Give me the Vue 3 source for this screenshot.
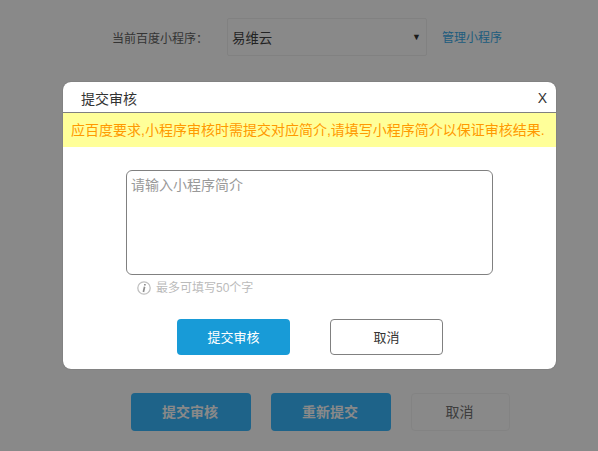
<template>
  <div class="page">
    <div class="app-row">
      <span class="app-label">当前百度小程序：</span>
      <div class="app-select">
        <span>易维云</span>
        <span class="arrow">▼</span>
      </div>
      <a class="manage-link">管理小程序</a>
    </div>

    <div class="page-actions">
      <button class="page-btn primary">提交审核</button>
      <button class="page-btn primary">重新提交</button>
      <button class="page-btn ghost">取消</button>
    </div>

    <!-- Submit dialog -->
    <div class="overlay">
      <div class="dialog">
        <div class="dialog-header">
          <span class="dialog-title">提交审核</span>
          <span class="dialog-close">X</span>
        </div>
        <div class="notice">应百度要求,小程序审核时需提交对应简介,请填写小程序简介以保证审核结果.</div>

        <div class="dialog-body">
          <textarea v-model="intro" class="intro-input" placeholder="请输入小程序简介" maxlength="50"></textarea>
          <div class="hint">
            <svg class="hint-icon" width="14" height="14" viewBox="0 0 14 14">
              <circle cx="7" cy="7" r="6.2" fill="none" stroke="#c0c0c0" stroke-width="1.3" />
              <path d="M7.9 3v1.6M7.6 5.8 6.4 11" fill="none" stroke="#8f8f8f" stroke-width="1.7" />
            </svg>
            <span>最多可填写50个字</span>
          </div>
          <div class="dialog-actions">
            <button class="dialog-btn submit">提交审核</button>
            <button class="dialog-btn cancel">取消</button>
          </div>
        </div>
      </div>
    </div>
  </div>
</template>

<script setup>
import { ref } from 'vue';

const intro = ref('');
</script>

<style>
html,
body {
  margin: 0;
  background: #fff;
}
</style>

<style scoped>
.page {
  position: relative;
  width: 598px;
  height: 451px;
  overflow: hidden;
  background: #fff;
  font-family: "Liberation Sans", "Noto Sans CJK SC", sans-serif;
  font-size: 12px;
  color: #333;
}

.app-row {
  display: flex;
  align-items: center;
  height: 38px;
  padding: 18px 0 0 112px;
}

.app-label {
  width: 115px;
  color: #555;
}

.app-select {
  display: flex;
  align-items: center;
  justify-content: space-between;
  box-sizing: border-box;
  width: 200px;
  height: 38px;
  padding: 0 5px 0 4px;
  border: 1px solid #eee;
  border-radius: 2px;
  font-size: 13.4px;
}

.arrow {
  font-size: 9px;
  color: #222;
}

.manage-link {
  margin-left: 15px;
  margin-top: -2px;
  color: #2aa5e8;
  font-size: 12px;
}

.page-actions {
  display: flex;
  gap: 20px;
  padding: 337px 0 0 131px;
}

.page-btn {
  box-sizing: border-box;
  width: 120px;
  height: 38px;
  padding: 0 2px 2px 0;
  border: 0;
  border-radius: 4px;
  font-family: inherit;
  font-size: 14px;
}

.page-btn.primary {
  background: #28b2ff;
  color: #fff;
  font-weight: bold;
}

.page-btn.ghost {
  width: 99px;
  background: #fff;
  border: 1px solid #f2f2f2;
  color: #666;
}

.overlay {
  position: absolute;
  inset: 0;
  background: rgba(20, 20, 20, 0.5);
}

.dialog {
  position: absolute;
  left: 63px;
  top: 82px;
  width: 493px;
  height: 287px;
  background: #fff;
  border-radius: 8px;
  overflow: hidden;
  box-shadow: 0 0 1px rgba(0, 0, 0, 0.5);
}

.dialog-header {
  display: flex;
  align-items: center;
  justify-content: space-between;
  box-sizing: border-box;
  height: 31px;
  padding: 2px 9px 0 18px;
  border-bottom: 1px solid #808080;
  font-size: 14px;
  color: #333;
}

.dialog-close {
  font-size: 14px;
}

.notice {
  height: 34px;
  padding-left: 8px;
  line-height: 34px;
  background: #ffff99;
  color: #ff9900;
  font-size: 14px;
  white-space: nowrap;
}

.dialog-body {
  display: flex;
  flex-direction: column;
  padding: 23px 63px 0;
}

.intro-input {
  display: block;
  box-sizing: border-box;
  width: 367px;
  height: 105px;
  padding: 3px 4px;
  border: 1px solid #808080;
  border-radius: 6px;
  outline: none;
  resize: none;
  font-family: inherit;
  font-size: 14px;
}

.intro-input::placeholder {
  color: #999;
}

.hint {
  display: flex;
  align-items: center;
  gap: 5px;
  height: 14px;
  margin: 6px 0 0 11px;
  color: #bbb;
  font-size: 12px;
  line-height: 12px;
}

.dialog-actions {
  display: flex;
  gap: 40px;
  margin: 24px 0 0 51px;
}

.dialog-btn {
  box-sizing: border-box;
  width: 113px;
  height: 36px;
  padding: 0 0 2px;
  border-radius: 4px;
  font-family: inherit;
  font-size: 13px;
}

.dialog-btn.submit {
  border: 0;
  background: #189bd7;
  color: #fff;
}

.dialog-btn.cancel {
  border: 1px solid #808080;
  background: #fff;
  color: #333;
}
</style>
